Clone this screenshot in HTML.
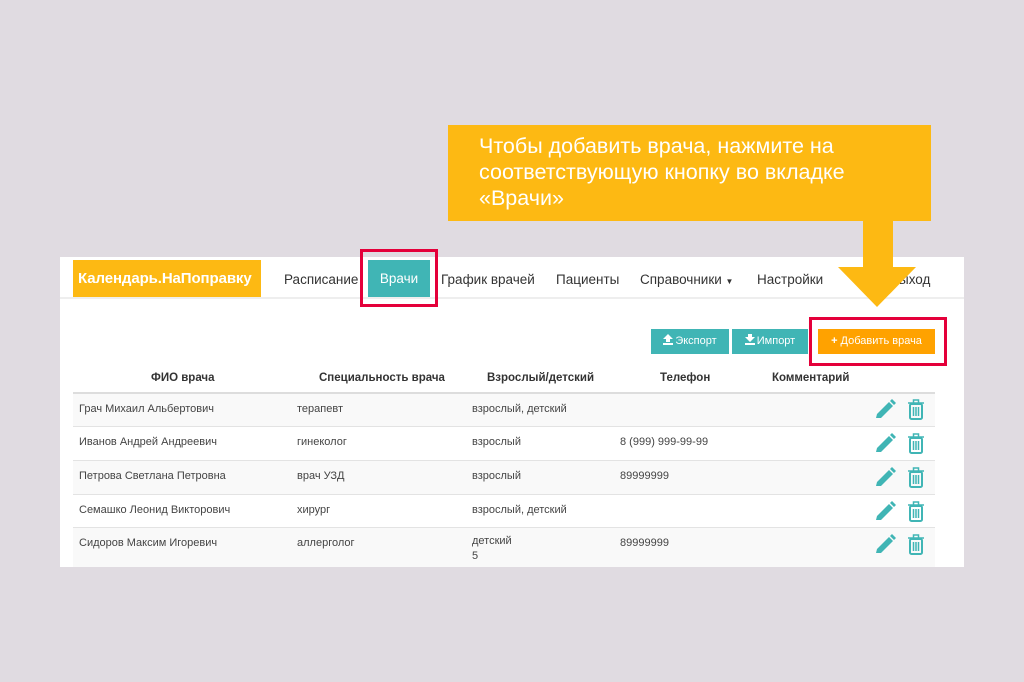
<!DOCTYPE html>
<html><head><meta charset="utf-8"><style>
*{margin:0;padding:0;box-sizing:border-box}
body{width:1024px;height:682px;background:#e0dbe1;position:relative;overflow:hidden;font-family:"Liberation Sans",sans-serif;color:#333}
.abs{position:absolute}
.panel{left:60px;top:257px;width:904px;height:310px;background:#fff}
.navline{left:60px;top:297px;width:904px;height:2px;background:#eee}
.logo{left:73px;top:260px;width:188px;height:37px;background:#fdb913;color:#fff;font-size:15px;line-height:37px;padding-left:5px;font-weight:bold;letter-spacing:-0.1px;white-space:nowrap;overflow:hidden}
.nav{top:272px;font-size:13.5px;color:#333}
.active{left:368px;top:260px;width:62px;height:37px;background:#40b5b5;color:#fff;font-size:13.5px;text-align:center;line-height:37px}
.red{border:3px solid #e4003a}
.btn{top:329px;height:25px;color:#fff;font-size:11px;line-height:25px;text-align:center}
.btn svg{vertical-align:-1px;margin-right:2px}
.th{top:372px;font-size:11.5px;font-weight:bold;color:#333}
.row{left:73px;width:862px;height:34px;border-top:1px solid #e3e3e3}
.cell{font-size:11px;color:#444;position:absolute;top:9px}
.callout{left:448px;top:125px;width:483px;height:96px;background:#fdb913;color:#fff;font-size:21.5px;line-height:26px;padding:8px 0 0 31px;white-space:nowrap}
</style></head><body>
<div class="abs callout">Чтобы добавить врача, нажмите на<br>соответствующую кнопку во вкладке<br>«Врачи»</div>
<div class="abs panel"></div>
<div class="abs navline"></div>
<div class="abs logo">Календарь.НаПоправку</div>
<div class="abs nav" style="left:284px">Расписание</div>
<div class="abs active">Врачи</div>
<div class="abs red" style="left:360px;top:249px;width:78px;height:58px"></div>
<div class="abs nav" style="left:441px">График врачей</div>
<div class="abs nav" style="left:556px">Пациенты</div>
<div class="abs nav" style="left:640px">Справочники <span style="font-size:8px">▼</span></div>
<div class="abs nav" style="left:757px">Настройки</div>
<div class="abs nav" style="left:890px">Выход</div>
<svg class="abs" style="left:836px;top:221px" width="82" height="88"><polygon points="27,0 57,0 57,46 80,46 41,86 2,46 27,46" fill="#fdb913"/></svg>
<div class="abs btn" style="left:651px;width:78px;background:#40b5b5"><svg width="10" height="11"><path d="M5,0 L10,5 H7 V8 H3 V5 H0 Z M0,9 H10 V11 H0 Z" fill="#fff"/></svg>Экспорт</div>
<div class="abs btn" style="left:732px;width:76px;background:#40b5b5"><svg width="10" height="11"><path d="M3,0 H7 V3 H10 L5,8 L0,3 H3 Z M0,9 H10 V11 H0 Z" fill="#fff"/></svg>Импорт</div>
<div class="abs btn" style="left:818px;width:117px;background:#ffa200"><b>+</b> Добавить врача</div>
<div class="abs red" style="left:809px;top:317px;width:138px;height:49px"></div>
<div class="abs th" style="left:151px">ФИО врача</div>
<div class="abs th" style="left:319px">Специальность врача</div>
<div class="abs th" style="left:487px">Взрослый/детский</div>
<div class="abs th" style="left:660px">Телефон</div>
<div class="abs th" style="left:772px">Комментарий</div>
<div class="abs row" style="top:392px;background:#f9f9f9;border-top:2px solid #ddd"><span class="cell" style="left:6px">Грач Михаил Альбертович</span><span class="cell" style="left:224px">терапевт</span><span class="cell" style="left:399px">взрослый, детский</span></div>
<div class="abs row" style="top:426px"><span class="cell" style="left:6px">Иванов Андрей Андреевич</span><span class="cell" style="left:224px">гинеколог</span><span class="cell" style="left:399px">взрослый</span><span class="cell" style="left:547px">8 (999) 999-99-99</span></div>
<div class="abs row" style="top:460px;background:#f9f9f9"><span class="cell" style="left:6px">Петрова Светлана Петровна</span><span class="cell" style="left:224px">врач УЗД</span><span class="cell" style="left:399px">взрослый</span><span class="cell" style="left:547px">89999999</span></div>
<div class="abs row" style="top:494px"><span class="cell" style="left:6px">Семашко Леонид Викторович</span><span class="cell" style="left:224px">хирург</span><span class="cell" style="left:399px">взрослый, детский</span></div>
<div class="abs row" style="top:527px;height:40px;background:#f9f9f9"><span class="cell" style="left:6px">Сидоров Максим Игоревич</span><span class="cell" style="left:224px">аллерголог</span><span class="cell" style="left:399px;line-height:15px;top:6px">детский<br>5</span><span class="cell" style="left:547px">89999999</span></div>
<svg class="abs" style="left:874px;top:398px" width="56" height="160">
<defs>
<g id="ic">
<path d="M2,19 L3,15 L15,3 L19,7 L7,19 Z" fill="#40b5b5"/><path d="M16,2 L18,0 L22,4 L20,6 Z" fill="#40b5b5"/>
<g transform="translate(34,0)" fill="none" stroke="#40b5b5" stroke-width="2"><rect x="2" y="5" width="12" height="15" rx="1.5"/><path d="M0,4 H16 M5.5,4 V1 H10.5 V4 M5.5,8 V17 M8,8 V17 M10.5,8 V17" stroke-width="1.5"/></g>
</g></defs>
<use href="#ic" y="1"/><use href="#ic" y="35"/><use href="#ic" y="69"/><use href="#ic" y="103"/><use href="#ic" y="136"/>
</svg>
</body></html>
